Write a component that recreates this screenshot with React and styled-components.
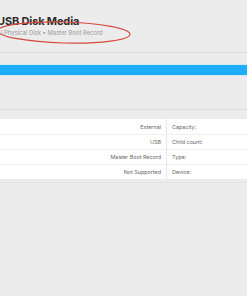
import React from 'react';
import styled, { createGlobalStyle } from 'styled-components';

const Global = createGlobalStyle`
	html, body {
		margin: 0;
		padding: 0;
		background: #ececec;
		font-family: Inter, "Liberation Sans", sans-serif;
	}
	#root {
		width: 247px;
		height: 296px;
		overflow: hidden;
	}
`;

const Page = styled.div`
	width: 247px;
	height: 296px;
	overflow: hidden;
	background: #ececec;
	display: flex;
	flex-direction: column;
`;

const Header = styled.div`
	position: relative;
	height: 53px;
	border-bottom: 1px solid #dedede;
	padding: 15px 0 0 0;
	box-sizing: border-box;
`;

const Title = styled.div`
	margin-left: -3px;
	font-size: 11px;
	font-weight: 700;
	color: #2a2a2a;
	line-height: 13px;
	letter-spacing: -0.15px;
`;

const Subtitle = styled.div`
	margin-left: 1px;
	margin-top: 1px;
	font-size: 5.9px;
	color: #9a9a9a;
	line-height: 8px;
`;

const Ellipse = styled.svg`
	position: absolute;
	left: -10px;
	top: 0;
	width: 150px;
	height: 52px;
	pointer-events: none;
`;

const BarTrack = styled.div`
	margin-top: 11px;
	height: 10px;
	background: #1eaef9;
	border-top: 1px solid #d4e9f5;
	border-bottom: 1px solid #d4e9f5;
`;

const Spacer = styled.div`
	height: 33px;
	border-bottom: 1px solid #dedede;
`;

const TableWrap = styled.div`
	padding: 9px 0 3px 0;
	border-bottom: 1px solid #e2e2e2;
`;

const Table = styled.div`
	background: #fff;
	display: flex;
	flex-direction: column;
`;

const Row = styled.div`
	display: grid;
	grid-template-columns: 167px 1fr;
	height: 15px;
	border-top: ${(p) => (p.$first ? 'none' : '1px solid #eeeeee')};
	box-sizing: border-box;
	font-size: 5.4px;
	color: #666;
	align-items: center;
`;

const Value = styled.div`
	text-align: right;
	padding-right: 5px;
	height: 100%;
	display: flex;
	align-items: center;
	justify-content: flex-end;
	border-right: 1px solid #e6e6e6;
`;

const Label = styled.div`
	padding-left: 5px;
`;

const rows = [
	['External', 'Capacity:'],
	['USB', 'Child count:'],
	['Master Boot Record', 'Type:'],
	['Not Supported', 'Device:'],
];

export default function App() {
	return (
		<Page>
			<Global />
			<Header>
				<Title>USB Disk Media</Title>
				<Subtitle>l Physical Disk • Master Boot Record</Subtitle>
				<Ellipse viewBox='-10 0 150 52'>
					<ellipse
						cx='64'
						cy='32.5'
						rx='66'
						ry='10.5'
						transform='rotate(1.5 64 32.5)'
						fill='none'
						stroke='#d6483c'
						strokeWidth='1.2'
					/>
				</Ellipse>
			</Header>
			<BarTrack />
			<Spacer />
			<TableWrap>
				<Table>
					{rows.map(([v, l], i) => (
						<Row key={l} $first={i === 0}>
							<Value>{v}</Value>
							<Label>{l}</Label>
						</Row>
					))}
				</Table>
			</TableWrap>
		</Page>
	);
}
